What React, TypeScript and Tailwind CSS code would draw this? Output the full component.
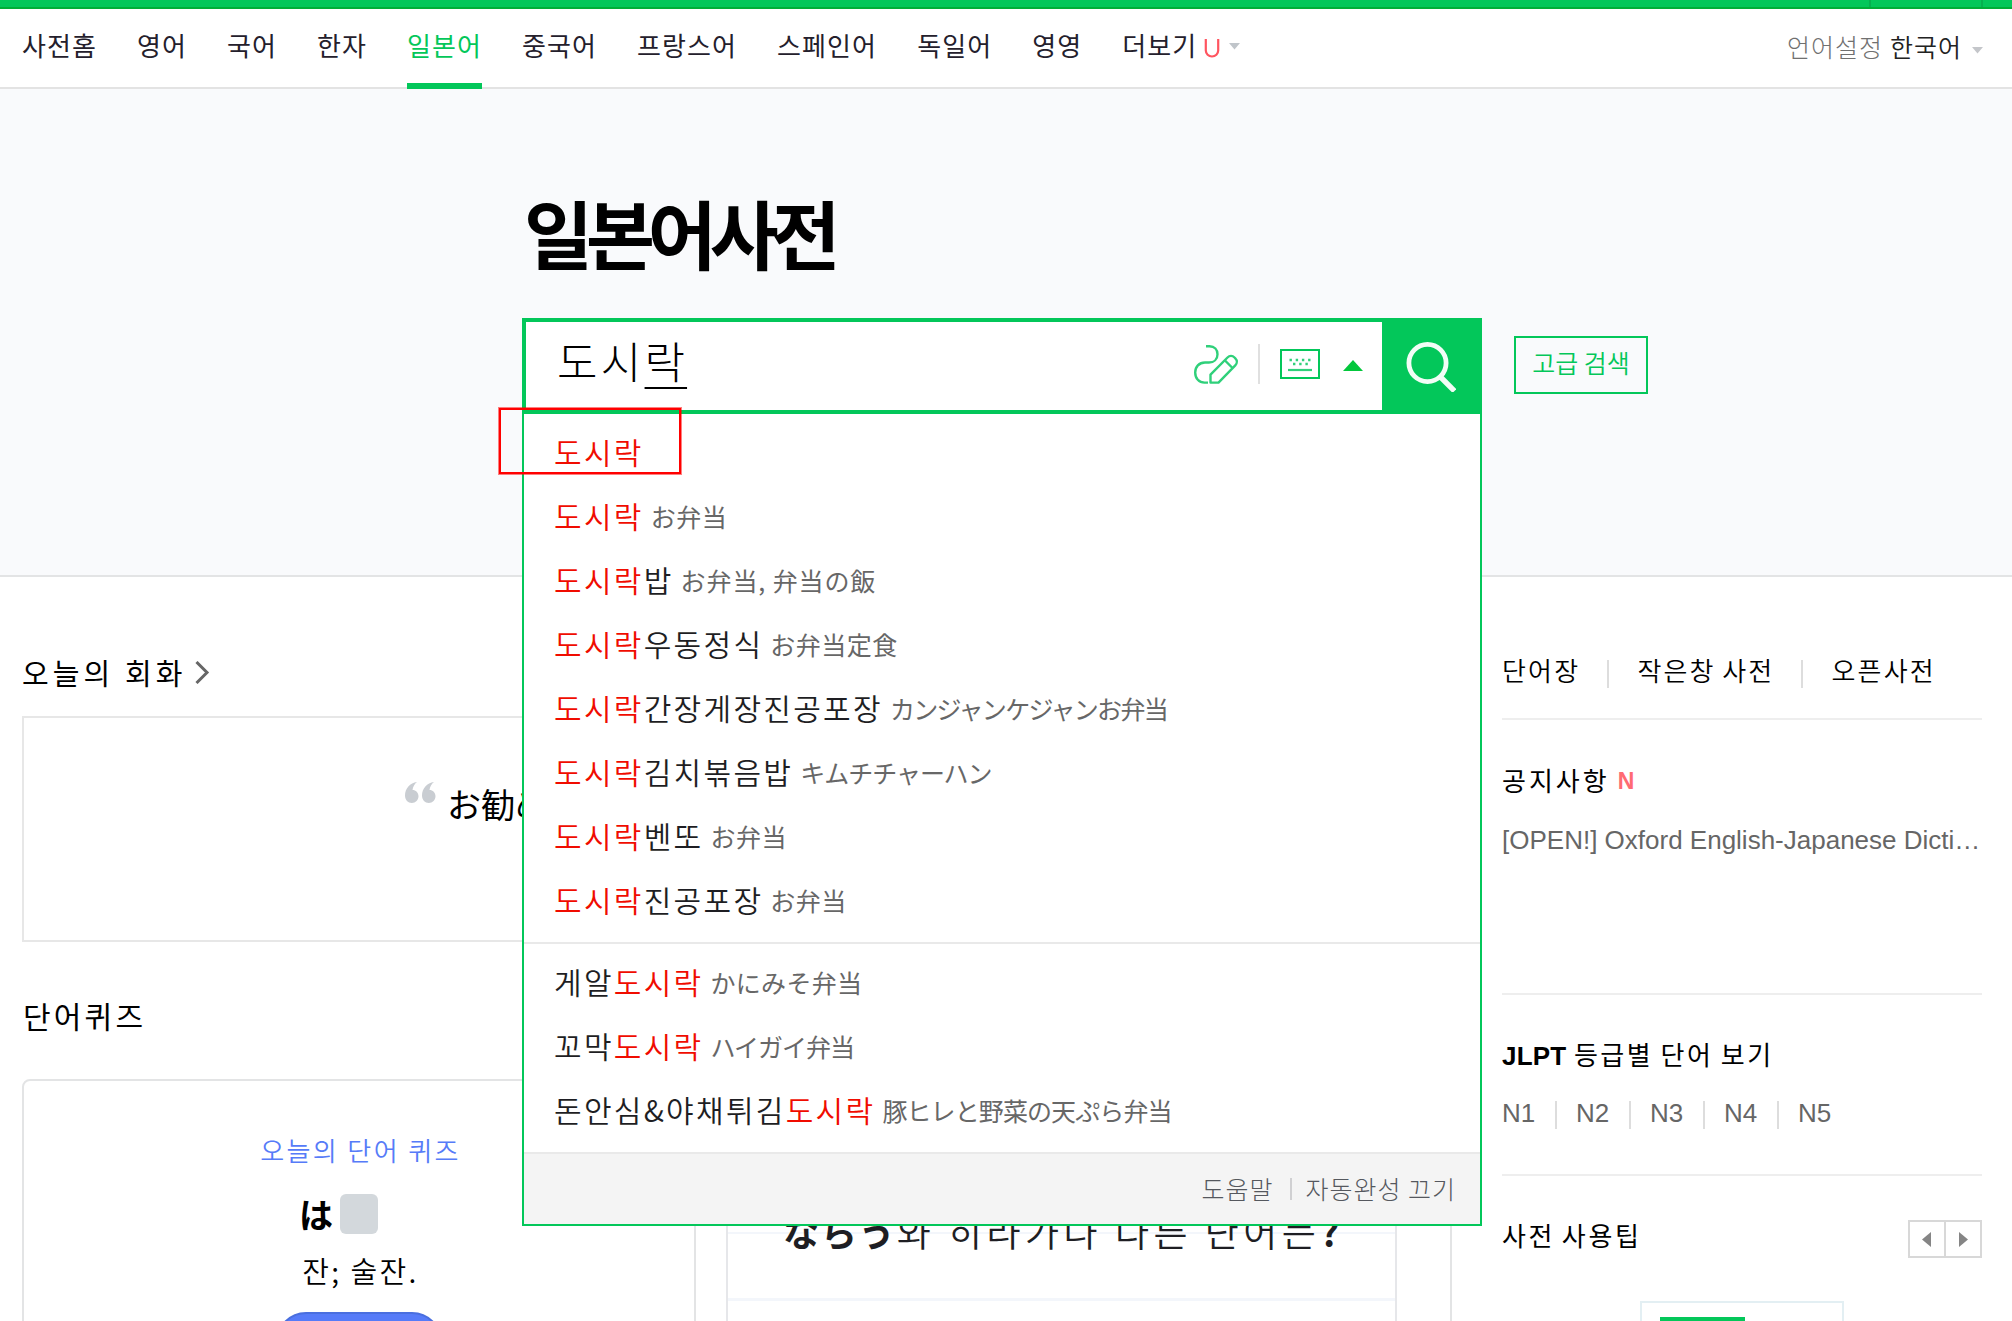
import React from 'react';

interface Suggestion {
  before?: string;
  after?: string;
  meaning?: string;
  tracking?: string;
}

const NAV_ITEMS = ['사전홈', '영어', '국어', '한자', '일본어', '중국어', '프랑스어', '스페인어', '독일어', '영영'];

const KEYWORD = '도시락';

// Suggestions that start with the keyword
const PREFIX_MATCHES: Suggestion[] = [
  {},
  { meaning: 'お弁当' },
  { after: '밥', meaning: 'お弁当, 弁当の飯', tracking: 'tracking-[0.9px]' },
  { after: '우동정식', meaning: 'お弁当定食' },
  { after: '간장게장진공포장', meaning: 'カンジャンケジャンお弁当', tracking: 'tracking-[-1.7px]' },
  { after: '김치볶음밥', meaning: 'キムチチャーハン', tracking: 'tracking-[-1px]' },
  { after: '벤또', meaning: 'お弁当' },
  { after: '진공포장', meaning: 'お弁当' },
];

// Suggestions that end with the keyword
const SUFFIX_MATCHES: Suggestion[] = [
  { before: '게알', meaning: 'かにみそ弁当', tracking: 'tracking-[0.3px]' },
  { before: '꼬막', meaning: 'ハイガイ弁当', tracking: 'tracking-[-1px]' },
  { before: '돈안심&야채튀김', meaning: '豚ヒレと野菜の天ぷら弁当', tracking: 'tracking-[-0.9px]' },
];

const JLPT_LEVELS = ['N1', 'N2', 'N3', 'N4', 'N5'];

function SuggestionRow({ item }: { item: Suggestion }) {
  return (
    <li className="flex h-16 items-center pl-[30px] whitespace-nowrap">
      <span className="text-[30px] leading-[40px] font-[330] tracking-[2.3px] text-[#1e1e23]">
        {item.before}
        <span className="text-[#f00c00]">{KEYWORD}</span>
        {item.after}
      </span>
      {item.meaning && (
        <span
          className={`ml-[7px] pt-[2px] font-['Noto_Sans_CJK_JP',sans-serif] text-[25px] leading-[38px] text-[#676767] ${item.tracking ?? 'tracking-[0.5px]'}`}
        >
          {item.meaning}
        </span>
      )}
    </li>
  );
}

function Header() {
  return (
    <>
      <div className="flex h-[9px] justify-end border-b-2 border-[#00ae37] bg-[#03c75a] pr-[29px]">
        <div className="h-full w-[114px] border-x-2 border-[#05b04f]" />
      </div>
      <header className="flex h-20 justify-between border-b-2 border-[#e3e3e3] bg-white pr-[29px] pl-[22px]">
        <nav className="flex gap-10 text-[26px] leading-[72px] tracking-[1.08px] text-[#24202c]">
          {NAV_ITEMS.map((item) =>
            item === '일본어' ? (
              <a key={item} className="h-20 border-b-6 border-[#03c75a] text-[#03c75a]">
                {item}
              </a>
            ) : (
              <a key={item}>{item}</a>
            ),
          )}
          <a className="flex">
            더보기
            <svg className="mt-[29px] ml-[7px]" width="16" height="20" viewBox="0 0 16 20" fill="none">
              <path d="M1.8 1v11.5a6.2 6 0 0 0 12.4 0V1" stroke="#ff5560" strokeWidth="2.2" />
            </svg>
            <svg className="mt-[34px] ml-[9px]" width="11" height="7" viewBox="0 0 11 7">
              <path d="M0 0h11L5.5 6.5z" fill="#c0c5ca" />
            </svg>
          </a>
        </nav>
        <div className="flex text-[25px] leading-[74px] font-light tracking-[1px] text-[#222]">
          <span className="mr-[7px] text-[#707070]">언어설정</span>
          <span className="font-[350]">한국어</span>
          <svg className="mt-[38px] ml-[10px]" width="11" height="7" viewBox="0 0 11 7">
            <path d="M0 0h11L5.5 6.5z" fill="#c4c6ca" />
          </svg>
        </div>
      </header>
    </>
  );
}

function Autocomplete() {
  return (
    <div className="absolute top-full left-0 z-10 w-[960px] border-2 border-t-0 border-[#03c75a] bg-white">
      <ul className="border-b-2 border-[#e9e9e9] pt-[5px] pb-[11px]">
        {PREFIX_MATCHES.map((item, i) => (
          <SuggestionRow key={i} item={item} />
        ))}
      </ul>
      <ul className="border-b-2 border-[#e9e9e9] pt-[5px] pb-[11px]">
        {SUFFIX_MATCHES.map((item, i) => (
          <SuggestionRow key={i} item={item} />
        ))}
      </ul>
      <div className="flex h-[70px] items-center justify-end bg-[#f4f4f4] pr-[24px] pb-[2px] text-[25px] leading-[40px] font-light tracking-[1px] text-[#55585e]">
        <span>도움말</span>
        <span className="mt-[2px] mr-[13px] ml-[17px] h-[22px] w-[2px] bg-[#d0d0d2]" />
        <span>자동완성 끄기</span>
      </div>

      {/* Highlight box around the first suggestion */}
      <div className="absolute top-[-6px] left-[-25px] h-[66px] w-[182px] border-2 border-[#ff0000] ring-1 ring-[#ff0000]/50" />
    </div>
  );
}

function SearchArea() {
  return (
    <section className="h-[488px] border-b-2 border-[#e3e4e5] bg-[#f9fafc] pt-[103px] pl-[522px]">
      <h1 className="pl-[2px] text-[75px] leading-[80px] font-bold tracking-[-7.1px] text-black">일본어사전</h1>
      <div className="mt-[46px] flex">
        <div className="relative flex h-24 w-[960px] border-4 border-[#03c75a] bg-white">
          <div className="flex-1 pt-[5px] pl-[31px] text-[44px] leading-[66px] font-light tracking-[3.300px] text-black">
            도시<span className="tracking-[2px] underline decoration-2 underline-offset-[8px]">락</span>
          </div>
          <div className="flex items-center pr-[19px] pb-1">
            {/* Handwriting input */}
            <svg width="44" height="39" viewBox="0 0 44 39" fill="none" stroke="#2fd07a" strokeWidth="2.4">
              <path d="M12 1.200h3.500c5 0 8 3.400 8 8 0 5-3.500 8.300-8.500 8.300h-4C5 17.500 1.200 22 1.200 27.500 1.200 33.500 5 37.600 10.500 37.600H14" />
              <path d="M16.500 37.600v-8L33.500 12.500c2-2 5-2 7 0l.8.800c2 2 2 5 0 7L24.500 37.600z" strokeLinejoin="round" />
              <path d="M31 15.500l7.500 7.500" />
            </svg>
            <span className="mr-5 ml-5 h-10 w-[2px] bg-[#e0e0e0]" />
            {/* Virtual keyboard */}
            <svg width="40" height="30" viewBox="0 0 40 30" fill="none">
              <rect x="1" y="1" width="38" height="28" stroke="#03c75a" strokeWidth="2" />
              <path d="M9.500 11h22" stroke="#2fd07a" strokeWidth="2.400" strokeDasharray="2.400 3.800" />
              <path d="M13 15h16" stroke="#2fd07a" strokeWidth="2.400" strokeDasharray="2.400 3.800" />
              <path d="M8 21h24" stroke="#2fd07a" strokeWidth="2.200" />
            </svg>
            <svg className="mt-[2px] ml-[23px]" width="20" height="11" viewBox="0 0 20 11">
              <path d="M10 0l10 11H0z" fill="#03c73c" />
            </svg>
          </div>
          <button className="-my-1 -mr-1 flex w-[100px] justify-center bg-[#03c75a] pt-6 pr-[2px]">
            <svg width="50" height="50" viewBox="0 0 50 50" fill="none" stroke="#f2fdf6" strokeWidth="4.800">
              <circle cx="21.500" cy="21" r="18.600" />
              <path d="M34.500 35l14 14" strokeWidth="5.400" />
            </svg>
          </button>
          <div className="absolute -right-1 -bottom-1 -left-1">
            <Autocomplete />
          </div>
        </div>
        <button className="mt-[18px] ml-8 h-[58px] w-[134px] border-2 border-[#03c75a] pb-[6px] text-[25px] leading-[48px] font-[350] text-[#03c75a]">
          고급 검색
        </button>
      </div>
    </section>
  );
}

function MainColumn() {
  return (
    <main className="w-[1430px]">
      <h2 className="mt-[75px] flex h-10 items-center text-[29px] leading-[40px] tracking-[4.100px] text-black">
        오늘의 회화
        <svg className="ml-[8px]" width="15" height="23" viewBox="0 0 15 23" fill="none">
          <path d="M1.500 1l10.500 10.500L1.500 22" stroke="#666" strokeWidth="3" />
        </svg>
      </h2>
      <div className="mt-[24px] flex h-[226px] border-2 border-[#e7e7e7] pt-[62px] pl-[381px]">
        <svg className="mt-[2px]" width="31" height="21" viewBox="0 0 31 21" fill="#c9cdd2">
          <path d="M12 0C5 1 0 6.500 0 13.500 0 18 3 21 6.800 21s6.700-3 6.700-6.700S10.800 8 7.500 8C8 4.500 9.500 2 12 0z" />
          <path d="M29 0c-7 1-12 6.500-12 13.500C17 18 20 21 23.800 21s6.700-3 6.700-6.700S27.800 8 24.500 8C25 4.500 26.500 2 29 0z" />
        </svg>
        <p className="ml-[11px] font-['Noto_Sans_CJK_JP',sans-serif] text-[34px] leading-[48px] text-black">お勧め</p>
      </div>

      <h2 className="mt-[53px] h-10 pl-[1px] text-[30px] leading-[40px] tracking-[3.200px] text-black">단어퀴즈</h2>
      <div className="mt-[44px] flex h-[400px]">
        <div className="flex w-[674px] flex-col items-center rounded-t-lg border-2 border-[#e3e4e5] text-black">
          <p className="mt-[49px] pl-[3px] text-[26px] leading-[40px] font-[350] tracking-[2.400px] text-[#567bf8]">
            오늘의 단어 퀴즈
          </p>
          <div className="mt-[24px] flex h-10 items-center gap-[7px] pr-[41px]">
            <span className="font-['Noto_Sans_CJK_JP',sans-serif] text-[34px] leading-[40px] font-bold">は</span>
            <span className="h-10 w-[38px] rounded-md bg-[#d3d8dc]" />
          </div>
          <p className="mt-[16px] pl-[3px] text-[29px] leading-[40px] font-[350] tracking-[2.400px]">잔; 술잔.</p>
          <button className="mt-[22px] h-[60px] w-[166px] rounded-full border-2 border-[#4a6fdf] bg-[#567bf8]" />
        </div>
        <div className="flex-1 border-r-2 border-[#e3e4e5] pl-[30px]">
          <div className="flex h-full w-[671px] flex-col border-x-2 border-[#e6e7ea]">
            <div className="h-[155px] border-b-2 border-[#f3f6fb]" />
            <p className="-mt-[3px] h-[70px] border-b-[3px] border-[#f3f6fb] pl-[55px] text-[37px] leading-[0px] font-[350] tracking-[4.500px] whitespace-nowrap text-[#1e1e23]">
              <span className="font-['Noto_Sans_CJK_JP',sans-serif] text-[36px] font-bold tracking-[1.900px]">ならう</span>
              와 히라가나 다른 단어는<span className="font-bold">?</span>
            </p>
          </div>
        </div>
      </div>
    </main>
  );
}

function SideColumn() {
  return (
    <aside className="ml-[50px] w-[480px] font-['Liberation_Sans','Noto_Sans_CJK_KR',sans-serif]">
      <div className="flex h-[143px] items-end border-b-2 border-[#eee] pb-[28px] text-[26px] leading-[36px] font-[350] tracking-[2.200px] text-black">
        <span>단어장</span>
        <span className="mr-[28px] mb-[2px] ml-[27px] h-7 w-[2px] bg-[#ddd]" />
        <span className="[word-spacing:-3px]">작은창 사전</span>
        <span className="mr-[28px] mb-[2px] ml-[27px] h-7 w-[2px] bg-[#ddd]" />
        <span>오픈사전</span>
      </div>

      <div className="h-[275px] border-b-2 border-[#eee] pt-[41px]">
        <h3 className="flex items-center text-[26px] leading-[40px] tracking-[3px] text-black">
          공지사항
          <span className="ml-[8px] pb-[2px] text-[23px] font-bold tracking-normal text-[#ff6b73]">N</span>
        </h3>
        <p className="mt-[17px] truncate text-[26px] leading-[40px] text-[#666]">
          [OPEN!] Oxford English-Japanese Dictionary
        </p>
      </div>

      <div className="h-[181px] border-b-2 border-[#eee] pt-[41px]">
        <h3 className="text-[26px] leading-[40px] tracking-[2.400px] text-black [word-spacing:-2px]">
          <b className="tracking-[0.200px]">JLPT</b> 등급별 단어 보기
        </h3>
        <ul className="mt-[17px] flex text-[26px] leading-[40px] text-[#666]">
          {JLPT_LEVELS.map((level, i) => (
            <li key={level} className="flex w-[74px]">
              {level}
              {i < JLPT_LEVELS.length - 1 && <span className="mt-[8px] ml-5 h-7 w-[2px] bg-[#ddd]" />}
            </li>
          ))}
        </ul>
      </div>

      <div className="flex justify-between pt-[44px]">
        <h3 className="text-[26px] leading-[34px] tracking-[2.600px] text-black [word-spacing:-3px]">사전 사용팁</h3>
        <div className="flex h-[38px] w-[74px] divide-x-2 divide-[#d8d8d8] border-2 border-[#d8d8d8]">
          <button className="flex w-[36px] items-center justify-center pr-[2px]">
            <svg width="9" height="15" viewBox="0 0 9 15">
              <path d="M9 0v15L0 7.500z" fill="#858585" />
            </svg>
          </button>
          <button className="flex flex-1 items-center justify-center">
            <svg width="9" height="15" viewBox="0 0 9 15">
              <path d="M0 0v15l9-7.500z" fill="#858585" />
            </svg>
          </button>
        </div>
      </div>
      <div className="mt-[43px] ml-[138px] h-[120px] w-[204px] border-2 border-[#e3eff3] pt-[14px] pl-[18px]">
        <div className="h-10 w-[85px] bg-[#03c75a]" />
      </div>
    </aside>
  );
}

export default function App() {
  return (
    <div className="h-[1321px] w-[2012px] overflow-hidden bg-white font-['Noto_Sans_CJK_KR','Noto_Sans_CJK_JP',sans-serif]">
      <Header />
      <SearchArea />
      <div className="flex pl-[22px]">
        <MainColumn />
        <SideColumn />
      </div>
    </div>
  );
}
